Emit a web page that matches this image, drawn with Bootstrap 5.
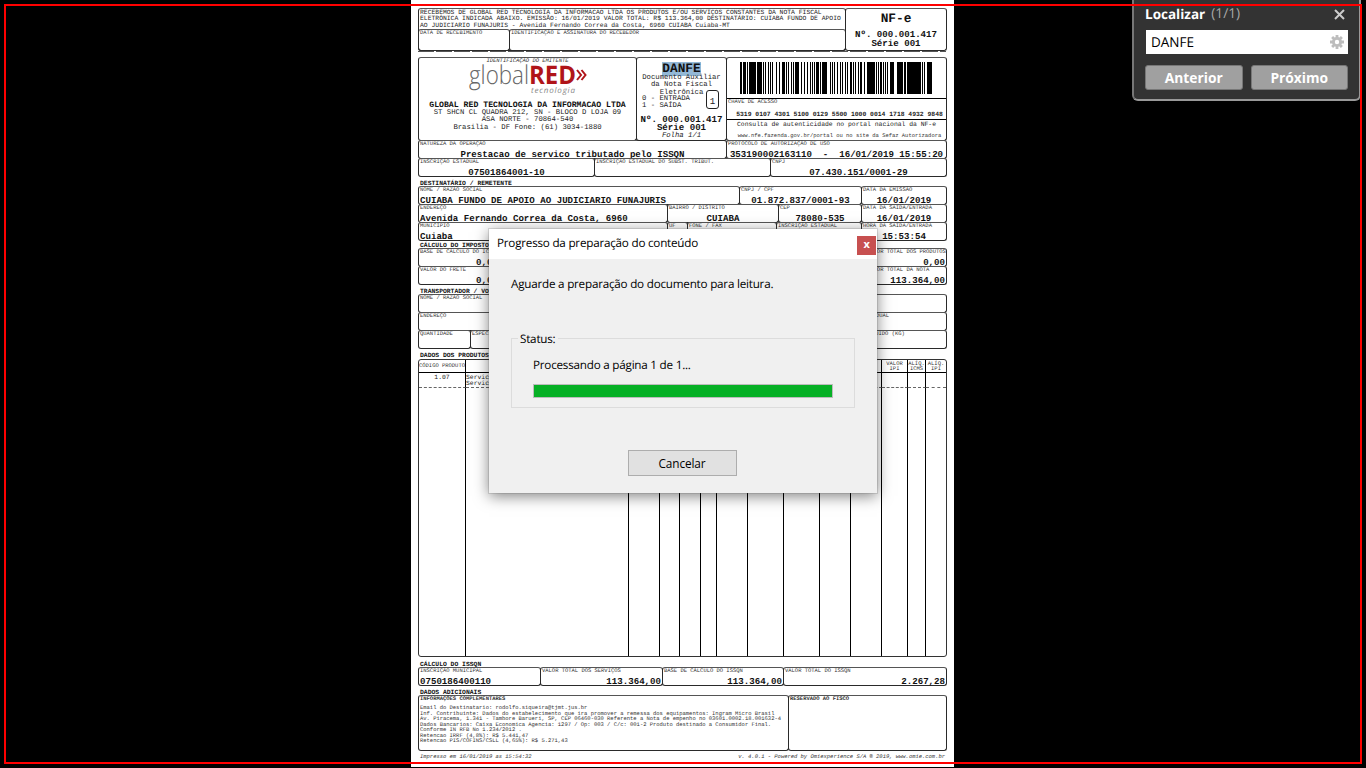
<!DOCTYPE html>
<html lang="pt-BR">
<head>
<meta charset="utf-8">
<meta name="viewport" content="width=device-width, initial-scale=1">
<title>DANFE</title>
<link href="https://cdn.jsdelivr.net/npm/bootstrap@5.3.0/dist/css/bootstrap.min.css" rel="stylesheet">
<script src="https://cdn.jsdelivr.net/npm/bootstrap@5.3.0/dist/js/bootstrap.bundle.min.js"></script>
<style>
html,body{height:768px;overflow:hidden;background:#000}
.ui{font-family:"Open Sans","Noto Sans",sans-serif;color:#000}
.viewer{width:1366px;height:768px;overflow:hidden;text-rendering:geometricPrecision}
.frame-line{inset:4px 4px 4px 4px;border:2px solid #f00;pointer-events:none;z-index:30}
/* fiscal document */
.sheet{width:543px;height:767px;margin-left:411px;padding:8px 8px 0 7px;font-family:"Liberation Mono",monospace;color:#222;white-space:nowrap}
.line{display:grid;width:528px;flex:none}
.cell{border:1px solid #2a2a2a;border-top-color:#555;border-radius:3px;margin:0 -1px -1px 0;display:flex;flex-direction:column;padding:0 1px;min-width:0;justify-content:space-between}
.lbl{font-size:5.47px;line-height:6px;color:#333}
.val{font-size:9.12px;line-height:9px;font-weight:700;color:#111}
.lbl + .val{margin-bottom:-1px}
.ttl{font-size:6.38px;font-weight:700;color:#111;padding:5px 0 0 2px;display:flex;align-items:center;flex:none;height:10px}
.ttl.low{height:8px;padding-top:4px}
.ttl.tall{height:11px}
.t6{font-size:6.38px;line-height:6.4px}
.t7{font-size:7.28px;line-height:7.3px}
.t12{font-size:12.8px;font-weight:700;line-height:14px;color:#111}
.g-a{grid-template-columns:427px 101px;height:41px}
.g-a1{grid-template-columns:91px 336px;width:427px;height:21px;margin:0 -1px 0 -1px}
.g-b{grid-template-columns:218px 90px 220px;height:83px}
.g-c{grid-template-columns:308px 220px;height:18px}
.g-d{grid-template-columns:176px 176px 176px;height:18px}
.g-e{grid-template-columns:321px 122px 85px;height:18px}
.g-f{grid-template-columns:249px 111px 83px 85px;height:18px}
.g-g{grid-template-columns:249px 20px 89px 85px 85px;height:18px}
.g-h{grid-template-columns:106px 106px 106px 126px 84px;height:18px}
.g-l{grid-template-columns:52px 160px 120px 98px 98px;height:18px}
.g-s{grid-template-columns:122px 122px 121px 163px;height:18px}
.g-t{grid-template-columns:370px 158px;height:55px}
.dash{height:1px;background:repeating-linear-gradient(90deg,#555 0 16px,#fff 16px 18px);margin:2px 0 5px;flex:none}
.rcpt{margin:1px 0 0 1px}
.emit{font-size:8.2px;line-height:9px;color:#111}
.danfe{margin-top:4px}
.hl{display:inline-block;line-height:14px;background:#93b8d6}
.doc{margin-top:-1px}
.ent{line-height:7.5px;margin-top:-1px}
.num{margin-top:5px;line-height:8.5px}
.inout{width:13px;height:19px;border:1px solid #222;border-radius:3px;font-size:9.12px;line-height:21px;right:7px;top:32px}
.bars{margin:4px 0 0 9px}
.key{margin-top:4px;border-top:1px solid #000;padding-left:1px}
.keynum{margin-top:7px;padding-left:6px}
.auth{border-top:1px solid #000;margin-top:1px;padding-top:2px}
.site{margin-top:4px;padding-left:6px}
.tot{margin-left:3px}
.st{margin-left:-33px}
.liq{margin-left:-1px}
.info{margin-top:3px;line-height:5.5px}
.foot{margin-top:4px;padding:0 1px 0 2px}
.items{width:529px;height:298px;border:1px solid #333;border-radius:3px;overflow:hidden;grid-template-columns:47px 163px 31px 20px 21px 16px 31px 36px 36px 31px 31px 26px 18px 20px;grid-template-rows:13px 15px 1fr}
.items>div{border-right:1px solid #000}
.items>div:nth-child(14n){border-right:0}
.items>div:nth-child(-n+14){border-bottom:1px solid #000;text-align:center;font-size:5.47px;line-height:5.2px;color:#333;padding-top:1px}
.items>div:nth-child(n+15):nth-child(-n+28){border-bottom:1px dashed #666;font-size:6.38px;line-height:6px;padding-top:2px}
.items>div.cod:first-child{padding-top:3px}
/* progress dialog */
.dlg{left:489px;top:229px;width:388px;height:264px;background:#f0f0f0;box-shadow:0 0 0 1px rgba(90,90,90,.18),0 3px 14px rgba(0,0,0,.5);font-size:11.7px;letter-spacing:-.23px;z-index:20}
.dlg-head{height:30px;padding-left:8px}
.shut{width:19px;height:19px;background:#c75050;color:#fff;font-size:11px;font-weight:700;line-height:17px;margin:3px 1px 0 0}
.msg{margin:16px 0 0 22px;line-height:18px}
.status-box{margin:45px 22px 0;height:70px;border:1px solid #dcdcdc;padding:0 21px}
.status-name{background:#f0f0f0;margin:-9px 0 0 -15px;padding:0 3px 0 2px;line-height:18px;width:40px}
.proc{margin-top:8px;line-height:18px}
.meter{margin-top:10px;height:14px;width:300px;border:1px solid #bcbcbc;border-radius:0;background:#e6e6e6}
.meter .progress-bar{background:#06b025}
.cancel-row{margin-top:42px;padding-right:2px}
.cancel{width:109px;height:26px;border:1px solid #adadad;background:#e1e1e1;border-radius:0;font-size:11.8px;padding:0;line-height:23px;color:#000;letter-spacing:-.1px}
/* find panel */
.finder{left:1132px;top:0;width:229px;height:101px;background:#333;border:2px solid #999;border-top:0;border-left-color:#777;border-radius:0 0 6px 6px;padding:4px 11px 0 11px;z-index:10}
.find-head{height:20px}
.find-name{font-size:13.5px}
.hits{color:#a8a8a8;font-size:13.8px;margin-left:6px}
.query{width:202px;height:24px;background:#fff;padding:0 4px 0 5px;font-size:13.5px;margin:6px 0 0 1px}
.find-btns{margin-top:11px;gap:8px}
.finder .btn{width:98px;height:25px;padding:0;background:#a0a0a0;border:1px solid #777;border-radius:3px;color:#fff;font-weight:700;font-size:13.8px;line-height:22px}
</style>
</head>
<body>
<main class="viewer position-relative ui">
  <section class="sheet bg-white d-flex flex-column">
    <div class="line g-a">
      <div class="cell p-0">
        <div class="t6 rcpt">RECEBEMOS DE GLOBAL RED TECNOLOGIA DA INFORMACAO LTDA OS PRODUTOS E/OU SERVIÇOS CONSTANTES DA NOTA FISCAL<br>ELETRÔNICA INDICADA ABAIXO. EMISSÃO: 16/01/2019 VALOR TOTAL: R$ 113.364,00 DESTINATÁRIO: CUIABA FUNDO DE APOIO<br>AO JUDICIARIO FUNAJURIS - Avenida Fernando Correa da Costa, 6960 CUIABA Cuiaba-MT</div>
        <div class="line g-a1">
          <div class="cell"><span class="lbl">DATA DE RECEBIMENTO</span></div>
          <div class="cell"><span class="lbl">IDENTIFICAÇÃO E ASSINATURA DO RECEBEDOR</span></div>
        </div>
      </div>
      <div class="cell text-center justify-content-start">
        <div class="t12 pt-1 mb-1 lh-1">NF-e</div>
        <div class="val">Nº. 000.001.417</div>
        <div class="val">Série 001</div>
      </div>
    </div>
    <div class="dash"></div>
    <div class="line g-b">
      <div class="cell text-center justify-content-start">
        <div class="lbl fst-italic">IDENTIFICAÇÃO DO EMITENTE</div>
        <svg class="mx-auto flex-shrink-0" width="120" height="37" viewBox="0 0 120 37" font-family="Open Sans, sans-serif">
          <text x="1" y="20" font-size="26" font-weight="300" fill="#666" textLength="60" lengthAdjust="spacingAndGlyphs">global</text>
          <text x="61" y="20" font-size="25.5" font-weight="700" fill="#b01419" textLength="47" lengthAdjust="spacingAndGlyphs">RED</text>
          <path d="M109 6l4 5-4 5M113.500 6l4 5-4 5" fill="none" stroke="#b01419" stroke-width="2"/>
          <text x="63" y="29" font-size="8" font-style="italic" fill="#888" textLength="44">tecnologia</text>
        </svg>
        <div class="emit fw-bold">GLOBAL RED TECNOLOGIA DA INFORMACAO LTDA</div>
        <div class="t7 mt-0 pt-0"><div class="pt-0" id="addr">ST SHCN CL QUADRA 212, SN - BLOCO D LOJA 09<br>ASA NORTE - 70864-540<br>Brasilia - DF Fone: (61) 3034-1880</div></div>
      </div>
      <div class="cell text-center justify-content-start position-relative">
        <div class="t12 danfe"><span class="hl">DANFE</span></div>
        <div class="t7 doc">Documento Auxiliar<br>da Nota Fiscal<br>Eletrônica</div>
        <div class="t7 text-start ps-1 ent">0 - ENTRADA<br>1 - SAÍDA</div>
        <div class="inout position-absolute">1</div>
        <div class="val num">Nº. 000.001.417<br>Série 001</div>
        <div class="t7 fst-italic">Folha 1/1</div>
      </div>
      <div class="cell text-center p-0 justify-content-start">
        <svg class="flex-shrink-0 bars" width="200" height="32" viewBox="736 0 200 32" shape-rendering="crispEdges">
          <path fill="none" stroke="#000" stroke-width="32" d="M740 16h2m1 0h3m1 0h1m1 0h7m1 0h5m1 0h1m1 0h1m2 0h1m1 0h1m1 0h1m3 0h1m2 0h1m2 0h3m1 0h1m1 0h1m2 0h1m1 0h1m1 0h4m2 0h1m2 0h1m2 0h1m2 0h1m1 0h1m1 0h1m1 0h3m1 0h1m1 0h5m3 0h1m1 0h1m1 0h1m2 0h1m2 0h1m1 0h1m2 0h1m1 0h1m2 0h2m1 0h1m1 0h1m2 0h1m1 0h2m2 0h1m2 0h8m1 0h1m1 0h1m1 0h2m1 0h1m1 0h1m1 0h1m2 0h4m3 0h6m1 0h2m1 0h14m1 0h1m1 0h1m2 0h5"/>
        </svg>
        <div class="lbl text-start key">CHAVE DE ACESSO</div>
        <div class="t6 fw-bold keynum">5319 0107 4301 5100 0129 5500 1000 0014 1718 4932 9848</div>
        <div class="t6 auth">Consulta de autenticidade no portal nacional da NF-e</div>
        <div class="lbl site">www.nfe.fazenda.gov.br/portal ou no site da Sefaz Autorizadora</div>
      </div>
    </div>
    <div class="line g-c">
      <div class="cell"><span class="lbl">NATUREZA DA OPERAÇÃO</span><span class="val text-center">Prestacao de servico tributado pelo ISSQN</span></div>
      <div class="cell"><span class="lbl">PROTOCOLO DE AUTORIZAÇÃO DE USO</span><span class="val text-center">353190002163110&nbsp; -&nbsp; 16/01/2019 15:55:20</span></div>
    </div>
    <div class="line g-d">
      <div class="cell"><span class="lbl">INSCRIÇÃO ESTADUAL</span><span class="val text-center">07501864001-10</span></div>
      <div class="cell"><span class="lbl">INSCRIÇÃO ESTADUAL DO SUBST. TRIBUT.</span></div>
      <div class="cell"><span class="lbl">CNPJ</span><span class="val text-center">07.430.151/0001-29</span></div>
    </div>
    <div class="ttl">DESTINATÁRIO / REMETENTE</div>
    <div class="line g-e">
      <div class="cell"><span class="lbl">NOME / RAZÃO SOCIAL</span><span class="val">CUIABA FUNDO DE APOIO AO JUDICIARIO FUNAJURIS</span></div>
      <div class="cell"><span class="lbl">CNPJ / CPF</span><span class="val text-center">01.872.837/0001-93</span></div>
      <div class="cell"><span class="lbl">DATA DA EMISSÃO</span><span class="val text-center">16/01/2019</span></div>
    </div>
    <div class="line g-f">
      <div class="cell"><span class="lbl">ENDEREÇO</span><span class="val">Avenida Fernando Correa da Costa, 6960</span></div>
      <div class="cell"><span class="lbl">BAIRRO / DISTRITO</span><span class="val text-center">CUIABA</span></div>
      <div class="cell"><span class="lbl">CEP</span><span class="val text-center">78080-535</span></div>
      <div class="cell"><span class="lbl">DATA DA SAÍDA/ENTRADA</span><span class="val text-center">16/01/2019</span></div>
    </div>
    <div class="line g-g">
      <div class="cell"><span class="lbl">MUNICÍPIO</span><span class="val">Cuiaba</span></div>
      <div class="cell"><span class="lbl">UF</span></div>
      <div class="cell"><span class="lbl">FONE / FAX</span></div>
      <div class="cell"><span class="lbl">INSCRIÇÃO ESTADUAL</span></div>
      <div class="cell"><span class="lbl">HORA DA SAÍDA/ENTRADA</span><span class="val text-center">15:53:54</span></div>
    </div>
    <div class="ttl low">CÁLCULO DO IMPOSTO</div>
    <div class="line g-h">
      <div class="cell"><span class="lbl">BASE DE CÁLCULO DO ICMS</span><span class="val ps-5"><span class="ps-2">0,00</span></span></div>
      <div class="cell"></div><div class="cell"></div><div class="cell"></div>
      <div class="cell"><span class="lbl tot">VALOR TOTAL DOS PRODUTOS</span><span class="val text-end">0,00</span></div>
    </div>
    <div class="line g-h">
      <div class="cell"><span class="lbl">VALOR DO FRETE</span><span class="val ps-5"><span class="ps-2">0,00</span></span></div>
      <div class="cell"></div><div class="cell"></div><div class="cell"></div>
      <div class="cell"><span class="lbl tot">VALOR TOTAL DA NOTA</span><span class="val text-end">113.364,00</span></div>
    </div>
    <div class="ttl">TRANSPORTADOR / VOLUMES</div>
    <div class="line g-e">
      <div class="cell"><span class="lbl">NOME / RAZÃO SOCIAL</span></div><div class="cell border-end-0 rounded-end-0"></div><div class="cell border-start-0 rounded-start-0"></div>
    </div>
    <div class="line g-h">
      <div class="cell"><span class="lbl">ENDEREÇO</span></div><div class="cell"></div><div class="cell"></div><div class="cell border-end-0 rounded-end-0"></div>
      <div class="cell border-start-0 rounded-start-0"><span class="lbl st">INSCRIÇÃO ESTADUAL</span></div>
    </div>
    <div class="line g-l">
      <div class="cell"><span class="lbl">QUANTIDADE</span></div>
      <div class="cell"><span class="lbl">ESPÉCIE</span></div>
      <div class="cell"></div><div class="cell"></div>
      <div class="cell"><span class="lbl liq">PESO LÍQUIDO (KG)</span></div>
    </div>
    <div class="ttl tall">DADOS DOS PRODUTOS</div>
    <div class="items d-grid flex-shrink-0">
      <div class="cod">CÓDIGO PRODUTO</div><div></div><div></div><div></div><div></div><div></div><div></div><div></div><div></div><div></div><div></div><div>VALOR<br>IPI</div><div>ALÍQ.<br>ICMS</div><div>ALÍQ.<br>IPI</div>
      <div class="text-center">1.07</div><div>Servico<br>Servico</div><div></div><div></div><div></div><div></div><div></div><div></div><div></div><div></div><div></div><div></div><div></div><div></div>
      <div></div><div></div><div></div><div></div><div></div><div></div><div></div><div></div><div></div><div></div><div></div><div></div><div></div><div></div>
    </div>
    <div class="ttl">CÁLCULO DO ISSQN</div>
    <div class="line g-s">
      <div class="cell"><span class="lbl">INSCRIÇÃO MUNICIPAL</span><span class="val">0750186400110</span></div>
      <div class="cell"><span class="lbl">VALOR TOTAL DOS SERVIÇOS</span><span class="val text-end">113.364,00</span></div>
      <div class="cell"><span class="lbl">BASE DE CÁLCULO DO ISSQN</span><span class="val text-end">113.364,00</span></div>
      <div class="cell"><span class="lbl">VALOR TOTAL DO ISSQN</span><span class="val text-end">2.267,28</span></div>
    </div>
    <div class="ttl">DADOS ADICIONAIS</div>
    <div class="line g-t">
      <div class="cell justify-content-start">
        <span class="lbl fw-bold">INFORMAÇÕES COMPLEMENTARES</span>
        <div class="lbl info">Email do Destinatario: rodolfo.siqueira@tjmt.jus.br<br>Inf. Contribuinte: Dados do estabelecimento que ira promover a remessa dos equipamentos: Ingram Micro Brasil<br>Av. Piracema, 1.341 - Tambore Barueri, SP, CEP 06460-030 Referente a Nota de empenho no 03601.0002.18.001632-4<br>Dados Bancarios: Caixa Economica Agencia: 1297 / Op: 003 / C/c: 001-2 Produto destinado a Consumidor Final.<br>Conforme IN RFB No 1.234/2012 .<br>Retencao IRRF (4,8%): R$ 5.441,47<br>Retencao PIS/COFINS/CSLL (4,65%): R$ 5.271,43</div>
      </div>
      <div class="cell"><span class="lbl fw-bold">RESERVADO AO FISCO</span></div>
    </div>
    <footer class="lbl fst-italic d-flex justify-content-between foot"><span>Impresso em 16/01/2019 as 15:54:32</span><span>v. 4.0.1 - Powered by Omiexperience S/A ® 2019, www.omie.com.br</span></footer>
  </section>

  <aside class="finder position-absolute">
    <div class="d-flex align-items-center find-head">
      <b class="text-white find-name">Localizar</b><span class="hits">(1/1)</span>
      <svg class="ms-auto me-0" width="14" height="11" viewBox="0 0 14 11"><path d="M1 1l9 9M10 1l-9 9" stroke="#ccc" stroke-width="2"/></svg>
    </div>
    <div class="query d-flex align-items-center justify-content-between"><span>DANFE</span>
      <svg width="14" height="14" viewBox="-7 -7 14 14" fill="none" stroke="#bdbdbd" stroke-width="2.8"><circle r="3.6"/><path d="M0-7v3M0 4v3M-7 0h3M4 0h3M-4.900-4.900l2 2M2.900 2.900l2 2M-4.900 4.900l2-2M2.900-2.900l2-2"/></svg>
    </div>
    <div class="d-flex find-btns"><button class="btn">Anterior</button><button class="btn">Próximo</button></div>
  </aside>

  <div class="dlg position-absolute">
    <div class="dlg-head bg-white d-flex align-items-center justify-content-between"><span>Progresso da preparação do conteúdo</span><span class="shut text-center">x</span></div>
    <div class="msg">Aguarde a preparação do documento para leitura.</div>
    <div class="status-box">
      <div class="status-name">Status:</div>
      <div class="proc">Processando a página 1 de 1...</div>
      <div class="progress meter"><div class="progress-bar w-100"></div></div>
    </div>
    <div class="text-center cancel-row"><button class="btn cancel">Cancelar</button></div>
  </div>
  <div class="frame-line position-absolute"></div>
</main>
</body>
</html>
